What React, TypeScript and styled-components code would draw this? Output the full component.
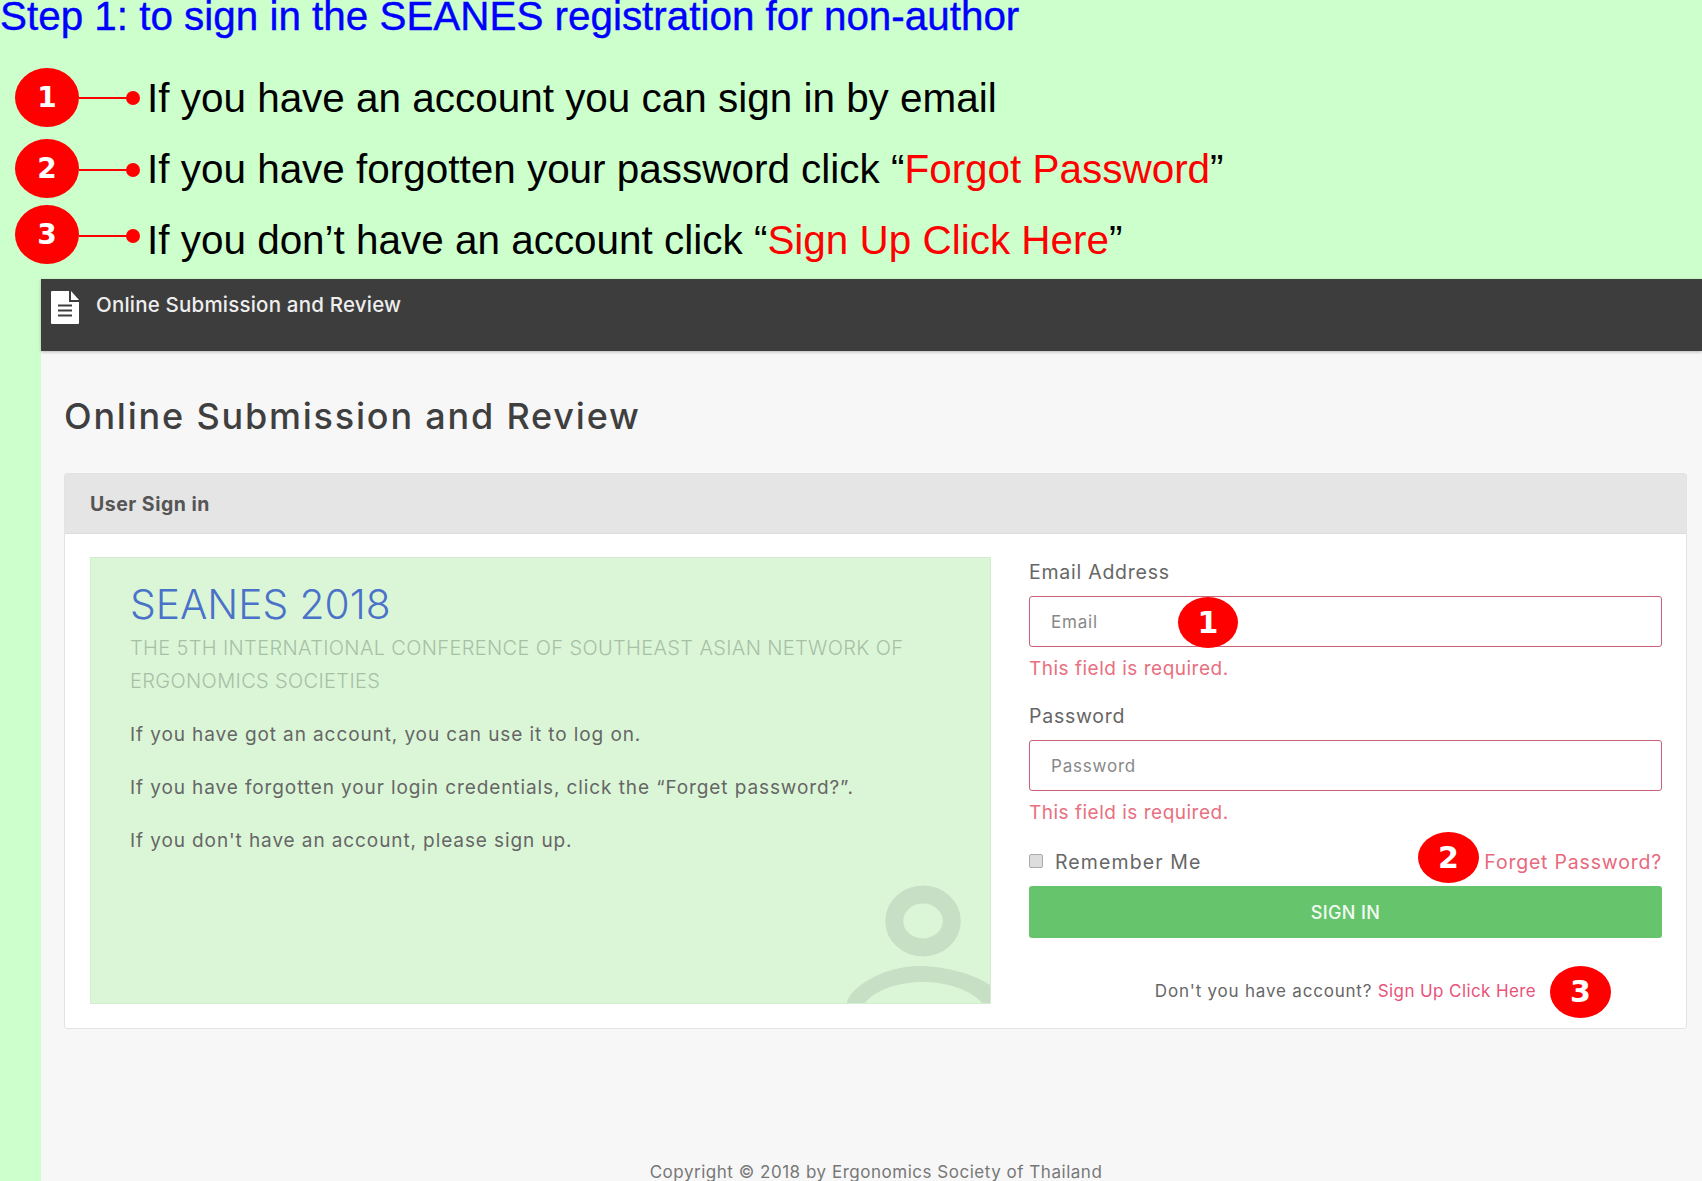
import React from "react";
import styled, { createGlobalStyle } from "styled-components";

const GlobalStyle = createGlobalStyle`
  html, body {
    margin: 0;
    padding: 0;
    width: 1702px;
    height: 1181px;
    overflow: hidden;
    background-color: #ccffcc;
  }
  * {
    box-sizing: border-box;
  }
`;

const callouts = [
  { n: "1", gap: 0, lineDrop: 0, textDrop: 2 },
  { n: "2", gap: 12, lineDrop: 3, textDrop: 2 },
  { n: "3", gap: 7, lineDrop: 3, textDrop: 12 },
];

const DocIcon = () => (
  <svg width="28" height="34" viewBox="0 0 28 34">
    <path d="M1 1h17v11h10v21a1 1 0 0 1-1 1H1a1 1 0 0 1-1-1V2a1 1 0 0 1 1-1z" fill="#fff" />
    <path d="M20 1l8 9h-8z" fill="#fff" />
    <path d="M7 15.5h14M7 20.5h14M7 25.5h14" stroke="#3d3d3d" strokeWidth="2" />
  </svg>
);

const UserMark = () => (
  <UserSvg width="143" height="123" viewBox="0 0 143 123">
    <ellipse cx="76" cy="41" rx="28.75" ry="26.5" fill="none" stroke="#c6dfc5" strokeWidth="18" />
    <path
      fillRule="evenodd"
      d="M0 123C2 108 36 86 72 86c28 0 56 9 71 19v18zM18 123c8-11 30-21 58-21 24 0 48 8 59 21z"
      fill="#c6dfc5"
    />
  </UserSvg>
);

const App = () => {
  return (
    <Page>
      <GlobalStyle />
      <Intro>
        <Step>Step 1: to sign in the SEANES registration for non-author</Step>
        {callouts.map((c) => (
          <Callout key={c.n} $gap={c.gap}>
            <Badge $w={64} $h={59} $size={28}>
              {c.n}
            </Badge>
            <Connector $drop={c.lineDrop}>
              <Dot />
            </Connector>
            <CalloutText $drop={c.textDrop}>
              {c.n === "1" && "If you have an account you can sign in by email"}
              {c.n === "2" && (
                <>
                  If you have forgotten your password click “<Red>Forgot Password</Red>”
                </>
              )}
              {c.n === "3" && (
                <>
                  If you don’t have an account click “<Red>Sign Up Click Here</Red>”
                </>
              )}
            </CalloutText>
          </Callout>
        ))}
      </Intro>

      <Site>
        <TopBar>
          <DocIcon />
          <Brand>Online Submission and Review</Brand>
        </TopBar>

        <Main>
          <PageTitle>Online Submission and Review</PageTitle>
          <Panel>
            <PanelHead>User Sign in</PanelHead>
            <PanelBody>
              <InfoBox>
                <InfoTitle>SEANES 2018</InfoTitle>
                <InfoSub>
                  THE 5TH INTERNATIONAL CONFERENCE OF SOUTHEAST ASIAN NETWORK OF ERGONOMICS SOCIETIES
                </InfoSub>
                <InfoText>If you have got an account, you can use it to log on.</InfoText>
                <InfoText>If you have forgotten your login credentials, click the “Forget password?”.</InfoText>
                <InfoText>If you don't have an account, please sign up.</InfoText>
                <UserMark />
              </InfoBox>

              <Form>
                <Field>
                  <Label>Email Address</Label>
                  <InputWrap>
                    <Input type="text" placeholder="Email" />
                    <FloatBadge $left={149} $top={1} $w={60} $h={51} $size={30}>
                      1
                    </FloatBadge>
                  </InputWrap>
                  <ErrorText>This field is required.</ErrorText>
                </Field>
                <Field>
                  <Label>Password</Label>
                  <InputWrap>
                    <Input type="password" placeholder="Password" />
                  </InputWrap>
                  <ErrorText>This field is required.</ErrorText>
                </Field>
                <RememberRow>
                  <RememberLabel>
                    <Check type="checkbox" />
                    Remember Me
                  </RememberLabel>
                  <ForgetLink>Forget Password?</ForgetLink>
                  <FloatBadge $left={389} $top={-16} $w={61} $h={51} $size={30}>
                    2
                  </FloatBadge>
                </RememberRow>
                <SignIn type="button">SIGN IN</SignIn>
                <SignUpLine>
                  Don't you have account? <SignUpLink>Sign Up Click Here</SignUpLink>
                  <FloatBadge $left={521} $top={-11} $w={61} $h={52} $size={30}>
                    3
                  </FloatBadge>
                </SignUpLine>
              </Form>
            </PanelBody>
          </Panel>
        </Main>

        <Footer>Copyright © 2018 by Ergonomics Society of Thailand</Footer>
      </Site>
    </Page>
  );
};

export default App;

const webFont = `Inter, "Open Sans", sans-serif`;

const Page = styled.div`
  width: 1702px;
  height: 1181px;
  display: flex;
  flex-direction: column;
  overflow: hidden;
  background-color: #ccffcc;
`;

const Intro = styled.div`
  height: 279px;
  flex-shrink: 0;
  font-family: "Liberation Sans", Arial, sans-serif;
`;

const Step = styled.h1`
  margin: 0 0 36px;
  height: 32px;
  font-size: 40.4px;
  line-height: 32px;
  font-weight: 400;
  color: #0000ff;
  white-space: nowrap;
  -webkit-text-stroke: 0.4px #0000ff;
`;

const Callout = styled.div<{ $gap: number }>`
  display: flex;
  align-items: center;
  height: 59px;
  margin-top: ${(p) => p.$gap}px;
  padding-left: 15px;
`;

const Badge = styled.div<{ $w: number; $h: number; $size: number }>`
  width: ${(p) => p.$w}px;
  height: ${(p) => p.$h}px;
  flex-shrink: 0;
  border-radius: 50%;
  background-color: #ff0000;
  color: #fff;
  display: flex;
  align-items: center;
  justify-content: center;
  font-family: "DejaVu Sans", sans-serif;
  font-weight: 700;
  font-size: ${(p) => p.$size}px;
`;

const FloatBadge = styled(Badge)<{ $left: number; $top: number }>`
  position: absolute;
  left: ${(p) => p.$left}px;
  top: ${(p) => p.$top}px;
  letter-spacing: 0;
`;

const Connector = styled.div<{ $drop: number }>`
  width: 61px;
  height: 14px;
  flex-shrink: 0;
  margin-top: ${(p) => p.$drop}px;
  display: flex;
  align-items: center;
  justify-content: flex-end;
  background: linear-gradient(#ff0000, #ff0000) left center / 50px 2px no-repeat;
`;

const Dot = styled.span`
  width: 14px;
  height: 14px;
  border-radius: 50%;
  background-color: #ff0000;
`;

const CalloutText = styled.div<{ $drop: number }>`
  margin-left: 7px;
  margin-top: ${(p) => p.$drop}px;
  font-size: 40.45px;
  line-height: 59px;
  color: #000;
  white-space: nowrap;
`;

const Red = styled.span`
  color: #ff0000;
`;

const Site = styled.div`
  flex: 1;
  margin-left: 41px;
  background-color: #f7f7f7;
  font-family: ${webFont};
`;

const TopBar = styled.div`
  height: 72px;
  padding: 11px 0 0 10px;
  display: flex;
  align-items: flex-start;
  gap: 17px;
  background-color: #3d3d3d;
  box-shadow: 0 1px 3px rgba(0, 0, 0, 0.25);
`;

const Brand = styled.div`
  font-size: 20.5px;
  line-height: 30px;
  font-weight: 500;
  letter-spacing: 0.2px;
  color: #eee;
  white-space: nowrap;
`;

const Main = styled.div`
  padding: 40px 15px 0 23px;
`;

const PageTitle = styled.h2`
  margin: 0 0 32px;
  font-size: 36px;
  line-height: 50px;
  font-weight: 500;
  letter-spacing: 1.8px;
  color: #3f3f3f;
`;

const Panel = styled.div`
  height: 556px;
  background-color: #fff;
  border: 1px solid #e3e3e3;
  border-radius: 3px;
`;

const PanelHead = styled.div`
  height: 60px;
  padding-left: 25px;
  display: flex;
  align-items: center;
  background-color: #e5e5e5;
  border-bottom: 1px solid #dcdcdc;
  font-size: 19.5px;
  font-weight: 700;
  letter-spacing: 0.5px;
  color: #555;
`;

const PanelBody = styled.div`
  display: flex;
  gap: 38px;
  padding: 23px 24px 0 25px;
`;

const InfoBox = styled.div`
  position: relative;
  width: 901px;
  height: 447px;
  flex-shrink: 0;
  padding: 20px 39px 0;
  overflow: hidden;
  background-color: #dbf6d7;
  border: 1px solid #d5ecd2;
`;

const UserSvg = styled.svg`
  position: absolute;
  right: 0;
  bottom: 0;
`;

const InfoTitle = styled.div`
  font-size: 40.7px;
  line-height: 54px;
  font-weight: 300;
  color: #4a72c9;
`;

const InfoSub = styled.div`
  margin-bottom: 23px;
  font-size: 20px;
  line-height: 33px;
  font-weight: 300;
  letter-spacing: 0.36px;
  color: #a6c0a6;
`;

const InfoText = styled.p`
  margin: 0 0 25px;
  font-size: 19px;
  line-height: 28px;
  letter-spacing: 0.9px;
  color: #666;
`;

const Form = styled.div`
  width: 633px;
  flex-shrink: 0;
  padding-top: 1px;
`;

const Field = styled.div`
  margin-bottom: 19px;
`;

const Label = styled.div`
  margin-bottom: 10px;
  font-size: 19.5px;
  line-height: 28px;
  letter-spacing: 0.75px;
  color: #666;
`;

const InputWrap = styled.div`
  position: relative;
  height: 51px;
`;

const Input = styled.input`
  width: 100%;
  height: 100%;
  padding: 0 21px;
  background-color: #fff;
  border: 1.5px solid #c9607a;
  border-radius: 3px;
  font-family: ${webFont};
  font-size: 17px;
  letter-spacing: 0.8px;
  color: #555;
  outline: none;

  &::placeholder {
    color: #888;
    opacity: 1;
  }
`;

const ErrorText = styled.div`
  margin-top: 8px;
  font-size: 19px;
  line-height: 28px;
  letter-spacing: 0.5px;
  color: #e8707f;
`;

const RememberRow = styled.div`
  position: relative;
  margin-top: 21px;
  display: flex;
  align-items: center;
  justify-content: space-between;
  height: 28px;
  font-size: 19.5px;
`;

const RememberLabel = styled.label`
  display: flex;
  align-items: center;
  gap: 12px;
  letter-spacing: 1.1px;
  color: #666;
`;

const Check = styled.input`
  appearance: none;
  width: 14px;
  height: 14px;
  margin: 0 0 2px;
  background-color: #ddd;
  border: 1px solid #aaa;
  border-radius: 2px;
`;

const ForgetLink = styled.a`
  letter-spacing: 0.8px;
  color: #e8697e;
`;

const SignIn = styled.button`
  display: block;
  width: 100%;
  height: 52px;
  margin-top: 10px;
  border: 0;
  border-radius: 3px;
  background-color: #66c46c;
  color: #f2fbf2;
  font-family: ${webFont};
  font-size: 18px;
  font-weight: 500;
  letter-spacing: 0.4px;
`;

const SignUpLine = styled.div`
  position: relative;
  margin-top: 39px;
  text-align: center;
  font-size: 17px;
  line-height: 28px;
  letter-spacing: 0.8px;
  color: #666;
`;

const SignUpLink = styled.a`
  letter-spacing: 0.4px;
  color: #e8537a;
`;

const Footer = styled.div`
  margin-top: 131px;
  padding-left: 9px;
  text-align: center;
  font-size: 17px;
  line-height: 24px;
  letter-spacing: 0.52px;
  color: #777;
`;
